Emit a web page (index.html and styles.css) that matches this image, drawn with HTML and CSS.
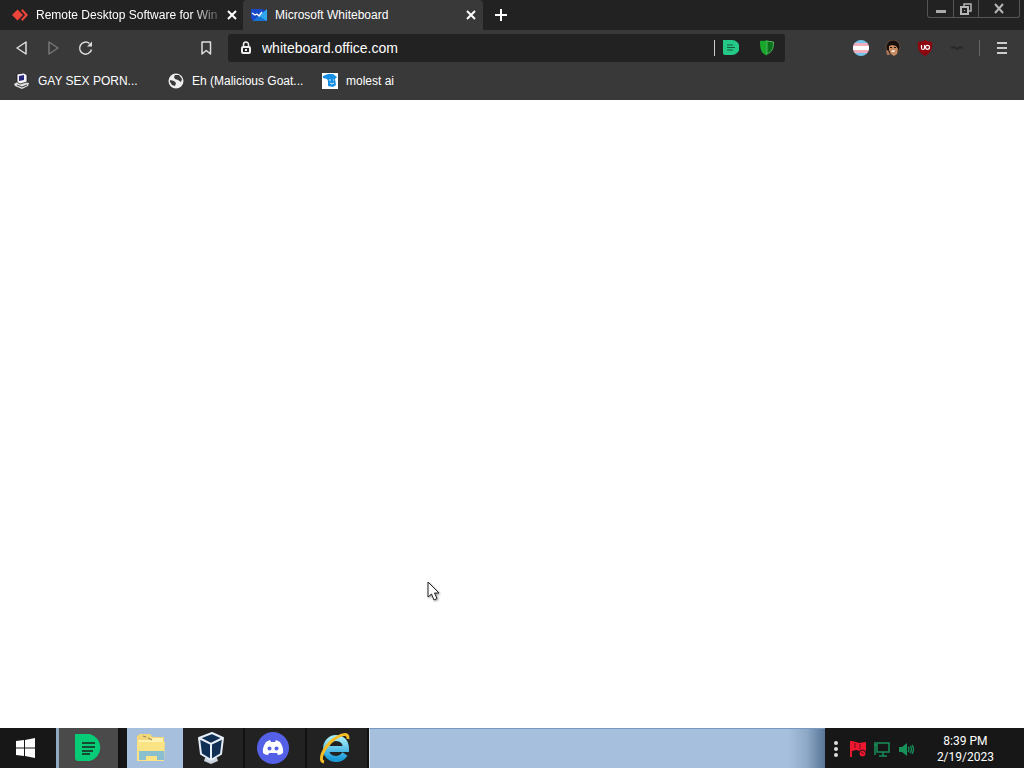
FILE: index.html
```html
<!DOCTYPE html>
<html lang="en">
<head>
    <meta charset="UTF-8">
    <meta name="viewport" content="width=device-width, initial-scale=1.0">
    <title>Microsoft Whiteboard</title>
    <link rel="stylesheet" href="styles.css">
</head>
<body>
    <header class="browser">
        <div class="tab-strip">
            <div class="tab">
                <svg class="icon" viewBox="0 0 16 16"><path fill="#ef443b" d="M5.5 2.5 11 8l-5.5 5.5L0 8z"/><path fill="#ef443b" d="M9 3.5 10.5 2 16 8l-5.5 6L9 12.5 13 8z"/></svg>
                <span class="tab-title faded">Remote Desktop Software for Win</span>
                <button class="tab-close" aria-label="Close tab"><svg viewBox="0 0 10 10"><path d="M1 1l8 8M9 1 1 9"/></svg></button>
            </div>
            <div class="tab active">
                <svg class="icon" viewBox="0 0 16 16"><path fill="#1748c8" d="M0 2h11l5 2v10H2l-2-3z"/><path fill="#2fa7ec" d="M8 9l8-7v12H2z"/><path fill="#1673d1" d="M2 14l6-5 8 5z"/><path fill="none" stroke="#fff" stroke-width="1.3" d="M1 6l3 2 2-1 2 2 3-4"/></svg>
                <span class="tab-title">Microsoft Whiteboard</span>
                <button class="tab-close" aria-label="Close tab"><svg viewBox="0 0 10 10"><path d="M1 1l8 8M9 1 1 9"/></svg></button>
            </div>
            <button class="new-tab" aria-label="New tab"><svg viewBox="0 0 12 12"><path d="M6 0v12M0 6h12"/></svg></button>
            <div class="window-buttons">
                <button aria-label="Minimize"><svg viewBox="0 0 12 12"><path fill="#aaa" d="M1 7h10v3H1z"/></svg></button>
                <button aria-label="Restore"><svg viewBox="0 0 12 12"><path fill="none" stroke="#b5b5b5" stroke-width="1.5" d="M4 3V1h7v7H9"/><path fill="none" stroke="#b5b5b5" stroke-width="2" d="M1 4h7v7H1z"/><path fill="#b5b5b5" d="M4 7h1v1H4z"/></svg></button>
                <button class="wide" aria-label="Close"><svg viewBox="0 0 12 12"><path fill="none" stroke="#b5b5b5" stroke-width="2" d="M2 1l8 9M10 1l-8 9"/></svg></button>
            </div>
        </div>

        <div class="toolbar">
            <div class="nav-buttons">
                <button aria-label="Back"><svg viewBox="0 0 16 16"><path class="line" d="M12 2v12L3 8z"/></svg></button>
                <button aria-label="Forward" disabled><svg viewBox="0 0 16 16"><path class="line" d="M3 2v12l9-6z"/></svg></button>
                <button aria-label="Reload"><svg viewBox="0 0 16 16"><path class="line" d="M13.5 9.5A6 6 0 1 1 11.5 3.5"/><path fill="#ddd" d="M9 6.500l5-5v5z"/></svg></button>
            </div>
            <button class="bookmark-button" aria-label="Bookmark"><svg viewBox="0 0 16 16"><path class="line" d="M4 2h8.5v12L8.2 10.500 4 14z"/></svg></button>
            <div class="address-bar">
                <svg class="icon" viewBox="0 0 16 16"><path fill="none" stroke="#eee" stroke-width="1.5" d="M5.5 7V4.500a2.500 2.500 0 0 1 5 0V7"/><rect x="4" y="7" width="8" height="6" rx="1" fill="none" stroke="#eee" stroke-width="2"/><path fill="#eee" d="M7 9h2v2H7z"/></svg>
                <input type="text" aria-label="Address" value="whiteboard.office.com">
                <span class="divider light"></span>
                <button aria-label="Page notes"><svg viewBox="0 0 16 16"><path fill="#24c987" d="M0 0h9a7 7 0 0 1 0 15H2a2 2 0 0 1-2-2z"/><path stroke="#155b40" stroke-width="1.2" d="M4 5h6M4 7.500h8M4 10h6"/></svg></button>
                <button class="shield" aria-label="Shield"><svg viewBox="0 0 16 16"><path fill="#19a82c" d="M8 0v15.500C3 13.500 1 11 1 1c3 0 5 0 7-1z"/><path fill="#0b701a" stroke="#55b660" d="M8 1c2 0 4 1 6.500 1 0 7-1.500 10-6.500 12z"/></svg></button>
            </div>
            <div class="extensions">
                <button aria-label="Flag extension"><svg viewBox="0 0 16 16"><defs><clipPath id="round"><circle cx="8" cy="8" r="8"/></clipPath></defs><g clip-path="url(#round)"><path fill="#74c5ec" d="M0 0h16v16H0z"/><path fill="#f3aebe" d="M0 3h16v10H0z"/><path fill="#fff" d="M0 6h16v4H0z"/></g></svg></button>
                <button aria-label="Profile extension"><svg viewBox="0 0 16 16"><circle cx="8" cy="7" r="7" fill="#15100e" stroke="#8b6541" stroke-width=".6"/><path fill="#c98b62" d="M4 6l3-1 4 1 2 3-1 5-3 2-3-2-2-4z"/><path fill="#21130e" d="M5 7h2v1H5zM9 7h2v1H9z"/><path fill="#fff" d="M6 11l4-1-1 2H7z"/><path fill="#a87455" d="M1 11l2-1 2 5H2z"/></svg></button>
                <button aria-label="Blocker"><svg viewBox="0 0 16 16"><path fill="#8c0710" d="M8 0c2 1 4 2 7 2 1 7-1 11-7 14C2 13 0 9 1 2c3 0 5-1 7-2z"/><path fill="none" stroke="#fff" stroke-width="1.2" d="M4.500 5v3q0 1.500 1.500 1.500T7.500 8V5"/><circle cx="10.5" cy="7.3" r="2" fill="none" stroke="#fff" stroke-width="1.2"/></svg></button>
                <button aria-label="Disabled extension"><svg viewBox="0 0 16 16"><path stroke="#292929" stroke-width="2" d="M2 8l3-1 3 2 3-2 3 1" fill="none"/></svg></button>
            </div>
            <span class="divider"></span>
            <button class="menu-button" aria-label="Menu"><svg viewBox="0 0 16 16"><path stroke="#ccc" stroke-width="2" d="M3 3h10M3 8h10M3 13h10"/></svg></button>
        </div>

        <nav class="bookmarks">
            <a href="#"><svg class="icon" viewBox="0 0 16 16"><path fill="#ddd" d="M0 11l5-3 10 2-1 3-6 3-7-3z"/><path fill="#f4f4fa" stroke="#111" stroke-width=".7" d="M3 1l7-1 3 2v7l-7 2-3-2z"/><path fill="#27277c" d="M5 3l5-1v5l-5 1z"/><path stroke="#444" d="M3 12l5 2 5-2" fill="none"/></svg>GAY SEX PORN...</a>
            <a href="#"><svg class="icon" viewBox="0 0 16 16"><circle cx="8" cy="8" r="7.5" fill="#eee"/><path fill="#3a3a3a" d="M2 7l4 1 2 2-1 3-3-1-2-3zM7 2h4l3 4-1 3-3-2-3-1-1-2z"/></svg>Eh (Malicious Goat...</a>
            <a href="#"><svg class="icon" viewBox="0 0 16 16"><path fill="#fff" d="M0 0h16v16H0z"/><path fill="#168fe5" d="M1 3l5-2h5l4 3-2 2 1 6-3 2-5-1V8L5 6 1 5z"/><path stroke="#d7f1ff" d="M7 7h2M11 7h1M8 10l2 1 2-1" fill="none"/></svg>molest ai</a>
        </nav>
    </header>

    <main class="page">
        <svg class="cursor" viewBox="0 0 14 20"><path fill="#fff" stroke="#222" d="M1 1v15l3.500-3 2.500 6 3-1.500-2.500-5.500H12z"/></svg>
    </main>

    <footer class="taskbar">
        <button class="start" aria-label="Start"><svg viewBox="0 0 20 20"><path fill="#fff" d="M0 3l8-1v7.500H0zM9 2l10-2v9.500H9zM0 10.500h8V18l-8-1zM9 10.500h10V20L9 18z"/></svg></button>
        <button class="task current" aria-label="Notes"><svg viewBox="0 0 32 32"><path fill="#08cb77" d="M2 2h15a14 14 0 0 1 0 27H5a3 3 0 0 1-3-3z"/><path stroke="#144b31" stroke-width="2" d="M9 11h13M9 15h13M9 19h11M9 22h8"/></svg></button>
        <button class="task explorer" aria-label="File Explorer"><svg viewBox="0 0 32 32"><path fill="#f4d778" d="M2 4l3-2h10l3 3h11v22H2z"/><path fill="#fff2b0" d="M3 8h12l3-2h10v20H3z"/><path fill="#f9e384" d="M2 10h28l-1 19H2z"/><path fill="#8abfcf" d="M4 19h25v9h-7v-4H11v4H4z"/><path stroke="#8b8060" d="M8 4l3 1M13 6l4 2" fill="none"/></svg></button>
        <button class="task" aria-label="VirtualBox"><svg viewBox="0 0 32 32"><path fill="#c9d4e0" d="M10 26h12l1 3-7 3-7-3z"/><path fill="#102f54" stroke="#e6eef7" stroke-width="2" stroke-linejoin="round" d="M4 6l13-5 11 5-2 16-10 6L6 22z"/><path fill="none" stroke="#e6eef7" stroke-width="2" d="M4 6l12 6 12-6M16 12v16"/></svg></button>
        <button class="task" aria-label="Discord"><svg viewBox="0 0 32 32"><circle cx="16" cy="16" r="16" fill="#5461e6"/><path fill="#fff" d="M9 10l4-2 1 2h4l1-2 4 2q4 6 3 11-2 2-5 2l-1-2h-8l-1 2q-3 0-5-2-1-5 3-11z"/><circle cx="12.5" cy="16.5" r="2" fill="#5461e6"/><circle cx="19.5" cy="16.5" r="2" fill="#5461e6"/></svg></button>
        <button class="task" aria-label="Internet Explorer"><svg viewBox="0 0 32 32"><defs><linearGradient id="ie" x2="0" y2="1"><stop stop-color="#a5ecfa"/><stop offset="1" stop-color="#1a9bd8"/></linearGradient></defs><path fill="none" stroke="url(#ie)" stroke-width="6" d="M8 17h19c0-7-4-11-10-11S7 11 7 17s4 10 10 10c4 0 7-2 9-5"/><path fill="none" stroke="#f6bd25" stroke-width="3" d="M5 30C-1 29 4 16 14 8 22 2 30 0 29 7"/></svg></button>
        <div class="desktop-peek"></div>
        <div class="tray">
            <svg class="grip" viewBox="0 0 6 18"><circle cx="3" cy="3" r="2"/><circle cx="3" cy="9" r="2"/><circle cx="3" cy="15" r="2"/></svg>
            <button aria-label="Alerts"><svg viewBox="0 0 18 18"><path fill="#ed1730" d="M1 1h2l4 1 3 1 7-1v9h-6l-4-1-4 1v6H1z"/><circle cx="13.5" cy="13.5" r="3.5" fill="#ed1730" stroke="#171717"/><path stroke="#6d1019" d="M6 3v5M11 4v5M12 12l3 2"/></svg></button>
            <button aria-label="Network"><svg viewBox="0 0 18 18"><path fill="none" stroke="#18905a" stroke-width="1.5" d="M4 3h12v9H4zM10 12v4M6 16h8M2 2v13M1 5h3"/></svg></button>
            <button aria-label="Volume"><svg viewBox="0 0 18 18"><path fill="#18905a" d="M2 7h3l5-4v13l-5-4H2z"/><path fill="none" stroke="#18905a" stroke-width="1.3" d="M11 7q2 2 0 5M13 6q3 3 0 7M15 5q3 4 0 9"/></svg></button>
            <div class="clock"><span>8:39 PM</span><span>2/19/2023</span></div>
        </div>
    </footer>
</body>
</html>
```
FILE: styles.css
```css
:root {
    --strip: #222222;
    --toolbar: #393939;
    --taskbar: #171717;
    --sky: #a5bfdc;
}

* {
    box-sizing: border-box;
}

body {
    margin: 0;
    min-height: 100vh;
    display: flex;
    flex-direction: column;
    background: #fff;
    font-family: "Liberation Sans", Arial, sans-serif;
    font-size: 12px;
    color: #fff;
}

button {
    display: flex;
    align-items: center;
    justify-content: center;
    padding: 0;
    border: 0;
    background: none;
    color: inherit;
}

svg {
    display: block;
    flex: none;
}

.icon {
    width: 16px;
    height: 16px;
}

.browser {
    background: var(--toolbar);
}

.tab-strip {
    display: flex;
    height: 30px;
    background: var(--strip);
}

.tab {
    display: flex;
    align-items: center;
    gap: 8px;
    flex: 0 1 240px;
    min-width: 0;
    padding: 0 7px 0 8px;
}

.tab:first-child {
    flex-basis: 243px;
    padding: 0 6px 0 12px;
}

.tab.active {
    background: var(--toolbar);
    border-radius: 4px 4px 0 0;
}

.tab-title {
    flex: 1;
    min-width: 0;
    overflow: hidden;
    white-space: nowrap;
}

.tab-title.faded {
    mask-image: linear-gradient(to right, #000 85%, rgba(0, 0, 0, 0.2));
}

.tab-close {
    width: 10px;
    height: 16px;
}

.tab-close svg {
    width: 10px;
    height: 10px;
    stroke: #fff;
    stroke-width: 2;
}

.new-tab {
    width: 36px;
}

.new-tab svg {
    width: 12px;
    height: 12px;
    stroke: #fff;
    stroke-width: 2;
}

.window-buttons {
    display: flex;
    height: 18px;
    margin-left: auto;
    margin-right: 4px;
    border: 1px solid #555;
    border-top: 0;
    border-radius: 0 0 3px 3px;
}

.window-buttons button {
    width: 25px;
}

.window-buttons button.wide {
    width: 41px;
}

.window-buttons button + button {
    border-left: 1px solid #555;
}

.window-buttons svg {
    width: 12px;
    height: 12px;
}

.toolbar {
    display: flex;
    align-items: center;
    height: 36px;
    padding: 0 14px;
}

.toolbar svg {
    width: 16px;
    height: 16px;
}

.nav-buttons,
.extensions {
    display: flex;
    gap: 16px;
}

.line {
    fill: none;
    stroke: #ddd;
    stroke-width: 1.5;
    stroke-linejoin: round;
}

button:disabled .line {
    stroke: #777;
}

.bookmark-button {
    margin-left: 104px;
}

.address-bar {
    display: flex;
    align-items: center;
    flex: 1;
    min-width: 0;
    height: 28px;
    margin: 0 68px 0 14px;
    padding: 0 10px;
    border-radius: 3px;
    background: var(--strip);
}

.address-bar input {
    flex: 1;
    min-width: 0;
    margin-left: 8px;
    padding: 0;
    border: 0;
    outline: 0;
    background: none;
    font: 14px "Liberation Sans", Arial, sans-serif;
    color: #fff;
}

.address-bar .shield {
    margin-left: 20px;
}

.divider {
    width: 1px;
    height: 16px;
    margin: 0 14px;
    background: #666;
}

.divider.light {
    margin: 0 8px;
    background: #ccc;
}

.bookmarks {
    display: flex;
    align-items: center;
    gap: 16px;
    height: 34px;
    padding: 0 14px 4px;
}

.bookmarks a {
    display: flex;
    align-items: center;
    gap: 8px;
    min-width: 138px;
    color: inherit;
    text-decoration: none;
    white-space: nowrap;
}

.page {
    position: relative;
    flex: 1;
    background: #fff;
}

/* mouse pointer floats over the page */
.cursor {
    position: absolute;
    left: 427px;
    top: 481px;
    width: 14px;
    height: 20px;
    filter: drop-shadow(1px 1px 1px rgba(0, 0, 0, 0.4));
}

.taskbar {
    display: flex;
    height: 40px;
    background: var(--taskbar);
}

.start {
    width: 56px;
    padding-right: 4px;
}

.start svg {
    width: 20px;
    height: 20px;
}

.task {
    width: 62px;
    padding-right: 4px;
    background: #222;
    border-right: 2px solid #111;
}

.task svg {
    width: 32px;
    height: 32px;
}

.task.current {
    width: 64px;
    padding: 0;
    background: #4a4a4a;
    border-left: 3px solid #8fa9c0;
}

.task.explorer {
    width: 56px;
    margin-left: 7px;
    padding-right: 8px;
    border: 0;
    background: var(--sky);
}

.desktop-peek {
    flex: 1;
    border-top: 1px solid #7898bd;
    border-left: 1px solid #d4e0ec;
    background: linear-gradient(to right, var(--sky) 92%, #8ea9c7 96%, #597597);
}

.tray {
    display: flex;
    align-items: center;
    gap: 6px;
    padding: 2px 30px 0 8px;
}

.tray svg {
    width: 18px;
    height: 18px;
}

.tray .grip {
    width: 6px;
    margin-right: 4px;
    fill: #ddd;
}

.clock {
    display: flex;
    flex-direction: column;
    align-items: center;
    margin-left: 16px;
    font-family: Roboto, sans-serif;
    line-height: 16px;
    color: #fff;
}
```
